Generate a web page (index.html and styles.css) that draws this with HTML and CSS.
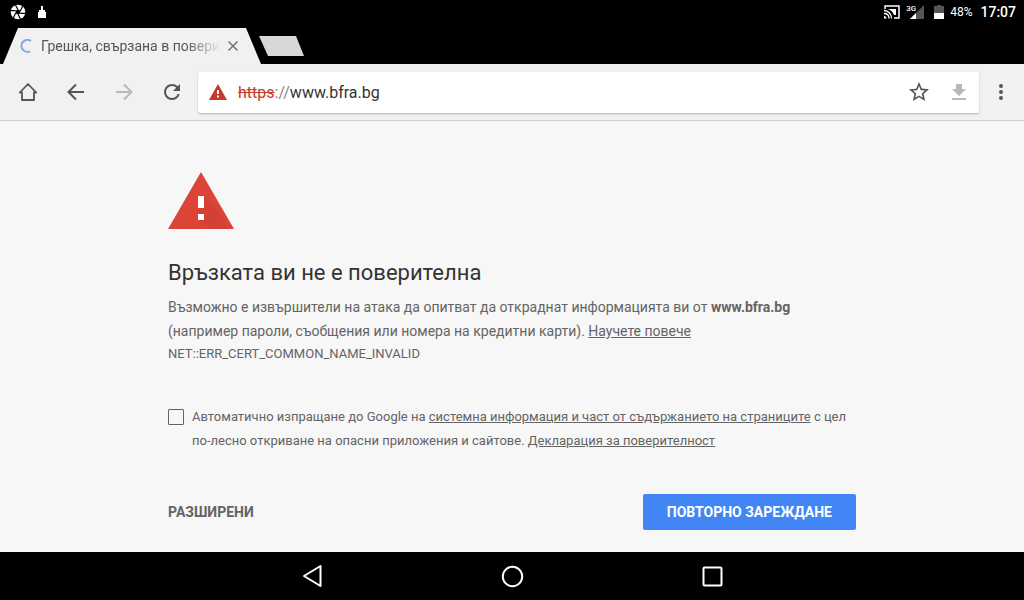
FILE: index.html
```html
<!DOCTYPE html>
<html lang="bg">
<head>
  <meta charset="UTF-8">
  <meta name="viewport" content="width=device-width, initial-scale=1.0">
  <title>Грешка, свързана в поверителността</title>
  <link rel="stylesheet" href="styles.css">
</head>

<body>
  <div class="status-bar">
    <div class="notifications">
      <svg width="16" height="16" viewBox="0 0 24 24">
        <circle cx="12" cy="12" r="11" fill="#fff"/>
        <path d="M8 1l4 7.500M19 3l-3.500 7.500M24 14h-8.500M16 23l-4-7.500M5 21l3.500-7.500M0 10h8.500" stroke="#000" stroke-width="1.800" fill="none"/>
        <path d="M10 8.500h4l2 3.500-2 3.500h-4L8 12z" fill="#000"/>
      </svg>
      <svg width="10" height="12" viewBox="0 0 10 12">
        <path d="M4 0h2v4h2v2h1v6H1V6h1V4h2z" fill="#fff"/>
      </svg>
    </div>
    <div class="system">
      <svg width="16" height="14" viewBox="0 0 16 14" fill="none" stroke="#fff">
        <path d="M1 4V1h14v12h-5" stroke-width="1.500"/>
        <path d="M4 4h8v6h-2C9 7 7 5 4 4z" fill="#fff" stroke="none"/>
        <path d="M0 5.500c4 0 7.500 3.500 7.500 8M0 8.500c3 0 5 2 5 5" stroke-width="1.300"/>
        <path d="M0 11c1.500 0 2.500 1 2.500 2.500H0z" fill="#fff" stroke="none"/>
      </svg>
      <span class="signal">
        <span class="network">3G</span>
        <svg width="14" height="14" viewBox="0 0 14 14">
          <path d="M14 0v14H0z" fill="#555"/>
          <path d="M6 8v6H0z" fill="#fff"/>
        </svg>
      </span>
      <svg width="10" height="15" viewBox="0 0 10 15">
        <path d="M3 0h4v1h3v7H0V1h3z" fill="#555"/>
        <path d="M0 8h10v6H0z" fill="#fff"/>
      </svg>
      <span class="percent">48%</span>
      <span class="clock">17:07</span>
    </div>
  </div>

  <div class="tab-strip">
    <div class="tab">
      <svg width="14" height="14" viewBox="0 0 14 14">
        <path d="M11 2A6 6 0 1 0 10 12.300" fill="none" stroke="#7ba7ee" stroke-width="2"/>
      </svg>
      <span class="tab-title">Грешка, свързана в поверителността</span>
      <button class="tab-close" aria-label="Затваряне">
        <svg width="12" height="12" viewBox="0 0 12 12">
          <path d="M1.500 1.500l9 9M10.500 1.500l-9 9" stroke="#777" stroke-width="1.600"/>
        </svg>
      </button>
    </div>
    <button class="new-tab" aria-label="Нов раздел"></button>
  </div>

  <header class="toolbar">
    <button class="icon-btn" aria-label="Начало">
      <svg width="20" height="20" viewBox="0 0 20 20">
        <path d="M1.800 10.500L10 2l8.200 8.500H16V18H4v-7.500z" fill="none" stroke="#555" stroke-width="1.800" stroke-linejoin="round"/>
      </svg>
    </button>
    <button class="icon-btn" aria-label="Назад">
      <svg width="20" height="20" viewBox="0 0 20 20">
        <path d="M18 10H3M10 2.500L2.500 10l7.500 7.500" fill="none" stroke="#555" stroke-width="2"/>
      </svg>
    </button>
    <button class="icon-btn" aria-label="Напред" disabled>
      <svg width="20" height="20" viewBox="0 0 20 20">
        <path d="M2 10h15M10 2.500l7.500 7.500-7.500 7.500" fill="none" stroke="#b8b8b8" stroke-width="2"/>
      </svg>
    </button>
    <button class="icon-btn" aria-label="Презареждане">
      <svg width="24" height="24" viewBox="0 0 24 24">
        <path d="M17.650 6.350A7.960 7.960 0 0 0 12 4a8 8 0 1 0 7.730 10h-2.080A6 6 0 1 1 12 6c1.660 0 3.140.690 4.220 1.780L13 11h7V4z" fill="#555"/>
      </svg>
    </button>
    <div class="omnibox">
      <svg width="18" height="16" viewBox="0 0 18 16">
        <path d="M9 0l9 16H0z" fill="#c53929"/>
        <path d="M8 6h2v4H8zM8 11.500h2v2H8z" fill="#fff"/>
      </svg>
      <label class="scheme" for="address"><s>https</s>://</label>
      <input class="address" id="address" type="text" value="www.bfra.bg">
      <button class="icon-btn omnibox-btn" aria-label="Отметка">
        <svg width="24" height="24" viewBox="0 0 24 24">
          <path d="M22 9.240l-7.190-.620L12 2 9.190 8.630 2 9.240l5.460 4.730L5.820 21 12 17.270 18.180 21l-1.630-7.030L22 9.240zM12 15.400l-3.760 2.270 1-4.280-3.320-2.880 4.380-.380L12 6.100l1.710 4.040 4.380.380-3.320 2.880 1 4.280L12 15.400z" fill="#555"/>
        </svg>
      </button>
      <button class="icon-btn omnibox-btn" aria-label="Изтегляне" disabled>
        <svg width="14" height="18" viewBox="0 0 14 18">
          <path d="M4 1h6v5h4l-7 7-7-7h4zM0 15h14v2H0z" fill="#b8b8b8"/>
        </svg>
      </button>
    </div>
    <button class="menu-btn" aria-label="Меню">
      <svg width="4" height="16" viewBox="0 0 4 16" fill="#555">
        <circle cx="2" cy="2" r="2"/>
        <circle cx="2" cy="8" r="2"/>
        <circle cx="2" cy="14" r="2"/>
      </svg>
    </button>
  </header>

  <main class="page">
    <div class="interstitial">
      <svg width="66" height="57" viewBox="0 0 66 57">
        <path d="M33 0l33 57H0z" fill="#db4437"/>
        <path d="M36 24l14 14 11 19H44L30 47z" fill="#c93f33" opacity=".4"/>
        <path d="M30 24h6v12h-6zM30 42h6v6h-6z" fill="#fff"/>
      </svg>
      <h1>Връзката ви не е поверителна</h1>
      <p class="message">Възможно е извършители на атака да опитват да откраднат информацията ви от <strong>www.bfra.bg</strong> (например пароли, съобщения или номера на кредитни карти). <a href="#">Научете повече</a></p>
      <div class="error-code">NET::ERR_CERT_COMMON_NAME_INVALID</div>
      <div class="opt-in">
        <input type="checkbox" id="report">
        <label for="report">Автоматично изпращане до Google на <a href="#">системна информация и част от съдържанието на страниците</a> с цел по-лесно откриване на опасни приложения и сайтове. <a href="#">Декларация за поверителност</a></label>
      </div>
      <div class="actions">
        <button class="details">РАЗШИРЕНИ</button>
        <button class="reload">ПОВТОРНО ЗАРЕЖДАНЕ</button>
      </div>
    </div>
  </main>

  <nav class="nav-bar">
    <button aria-label="Назад">
      <svg width="24" height="24" viewBox="0 0 24 24">
        <path d="M20.500 2v20L4 12z" fill="none" stroke="#fff" stroke-width="2" stroke-linejoin="round"/>
      </svg>
    </button>
    <button aria-label="Начален екран">
      <svg width="24" height="24" viewBox="0 0 24 24">
        <circle cx="12.500" cy="12.500" r="9.700" fill="none" stroke="#fff" stroke-width="2"/>
      </svg>
    </button>
    <button aria-label="Скорошни">
      <svg width="24" height="24" viewBox="0 0 24 24">
        <rect x="3.500" y="3.500" width="18" height="18" rx="1" fill="none" stroke="#fff" stroke-width="2"/>
      </svg>
    </button>
  </nav>
</body>
</html>
```
FILE: styles.css
```css
* {
  box-sizing: border-box;
}

body {
  margin: 0;
  min-height: 100vh;
  display: flex;
  flex-direction: column;
  font-family: Roboto, sans-serif;
  background-color: #000;
  color: #646464;
}

button {
  display: flex;
  align-items: center;
  justify-content: center;
  padding: 0;
  border: none;
  background: none;
  font-family: inherit;
  cursor: pointer;
}

svg {
  display: block;
  flex-shrink: 0;
}

/* Android status bar */
.status-bar {
  display: flex;
  justify-content: space-between;
  height: 24px;
  padding: 0 8px 0 10px;
  color: #fff;
}

.notifications {
  display: flex;
  align-items: center;
  gap: 11px;
}

.system {
  display: flex;
  align-items: center;
}

.signal {
  display: flex;
  align-items: flex-end;
  margin: 0 10px 0 6px;
}

.network {
  align-self: flex-start;
  font-size: 8px;
  line-height: 8px;
  font-weight: 500;
  margin-right: -6px;
}

.percent {
  margin: 0 8px 0 6px;
  font-size: 12px;
}

.clock {
  font-size: 14px;
  font-weight: 500;
}

/* Tabs */
.tab-strip {
  display: flex;
  align-items: flex-end;
  height: 40px;
  padding-left: 3px;
}

.tab {
  display: flex;
  align-items: center;
  width: 258px;
  height: 36px;
  padding: 0 20px 0 17px;
  background-color: #f1f1f1;
  clip-path: polygon(15px 0, 243px 0, 100% 100%, 0 100%);
}

.tab-title {
  width: 180px;
  margin-left: 7px;
  overflow: hidden;
  white-space: nowrap;
  font-size: 14px;
  color: #555;
  mask-image: linear-gradient(to right, #000 80%, transparent);
}

.tab-close {
  margin-left: 6px;
}

.new-tab {
  width: 45px;
  height: 20px;
  margin: 0 0 8px -2px;
  background-color: #d8d8d8;
  clip-path: polygon(0 0, 37px 0, 100% 100%, 9px 100%);
}

/* Toolbar */
.toolbar {
  display: flex;
  align-items: center;
  height: 57px;
  padding: 0 11px 0 4px;
  background-color: #f1f1f1;
  border-bottom: 1px solid #cfcfcf;
}

.icon-btn {
  width: 48px;
  height: 40px;
  flex-shrink: 0;
}

.omnibox {
  display: flex;
  align-items: center;
  flex: 1;
  height: 41px;
  margin: 0 10px 0 2px;
  padding-left: 11px;
  background-color: #fff;
  border-radius: 2px;
  box-shadow: 0 1px 2px rgba(0,0,0,0.25);
}

.omnibox-btn {
  width: 40px;
}

.scheme {
  margin-left: 11px;
  font-size: 16px;
  color: #888;
}

.scheme s {
  color: #c53929;
}

.address {
  flex: 1;
  min-width: 0;
  padding: 0;
  border: none;
  outline: none;
  background: none;
  font-family: inherit;
  font-size: 16px;
  color: #333;
}

.menu-btn {
  width: 24px;
  height: 40px;
}

/* Warning page */
.page {
  flex: 1;
  padding: 51px 24px 22px;
  background-color: #f7f7f7;
}

.interstitial {
  max-width: 688px;
  margin: 0 auto;
}

h1 {
  margin: 29px 0 7px;
  font-size: 22px;
  line-height: 30px;
  font-weight: 400;
  color: #333;
}

a {
  color: inherit;
}

.message {
  margin: 0;
  font-size: 14px;
  line-height: 24px;
}

.error-code {
  font-size: 13px;
  line-height: 22px;
}

.opt-in {
  display: flex;
  align-items: flex-start;
  gap: 8px;
  margin-top: 40px;
  font-size: 13px;
  line-height: 24px;
}

.opt-in input {
  appearance: none;
  flex-shrink: 0;
  width: 16px;
  height: 16px;
  margin: 4px 0 0;
  border: 1px solid #646464;
  border-radius: 1px;
}

.actions {
  display: flex;
  align-items: center;
  justify-content: space-between;
  margin-top: 41px;
}

.actions button {
  height: 36px;
  font-size: 14px;
  font-weight: 700;
}

.details {
  color: #646464;
}

.actions .reload {
  padding: 0 24px;
  border-radius: 2px;
  background-color: #4285f4;
  color: #fff;
}

/* Android navigation */
.nav-bar {
  display: flex;
  justify-content: center;
  gap: 80px;
  height: 48px;
}

.nav-bar button {
  width: 120px;
}
```
